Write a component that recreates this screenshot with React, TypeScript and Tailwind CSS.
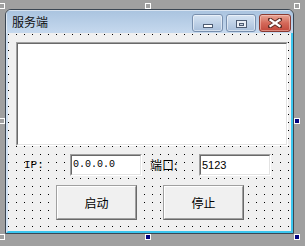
import React from 'react'

const cjk = "font-['Noto_Sans_CJK_SC','Noto_Sans',sans-serif]"

function Handle({ className, filled }: { className: string; filled?: boolean }) {
    return (
        <div
            className={
                'absolute w-[6px] h-[6px] border border-white ' +
                (filled ? 'bg-[#000080] ' : '') +
                className
            }
        />
    )
}

function Sunken({ className, children }: { className: string; children?: React.ReactNode }) {
    return (
        <div className={'border border-t-[#a0a0a0] border-l-[#a0a0a0] border-r-white border-b-white ' + className}>
            <div className="h-full w-full border border-t-[#696969] border-l-[#696969] border-r-[#e3e3e3] border-b-[#e3e3e3] bg-white flex items-center">
                {children}
            </div>
        </div>
    )
}

function RaisedButton({ label, className }: { label: string; className?: string }) {
    return (
        <div className={'w-[81px] h-[35px] border border-t-[#a0a0a0] border-l-[#a0a0a0] border-r-[#696969] border-b-[#696969] ' + (className ?? '')}>
            <div className="h-full w-full border border-t-white border-l-white border-r-[#a0a0a0] border-b-[#a0a0a0] bg-[#f0f0f0] flex items-center justify-center">
                <span className={cjk + ' text-[12px] text-black leading-none'}>{label}</span>
            </div>
        </div>
    )
}

function TitleButton({ children, className }: { children: React.ReactNode; className: string }) {
    return (
        <div className={'h-[18px] rounded-[3px] border flex items-end justify-center ' + className}>
            {children}
        </div>
    )
}

export default function App() {
    return (
        <div className="relative w-[305px] h-[246px] overflow-hidden bg-[#a0a0a0] pl-[5px] pt-[9px]">
            {/* form window */}
            <div className="w-[289px] h-[225px] rounded-t-[6px] border border-[#3b4652] flex flex-col overflow-hidden">
                {/* title bar */}
                <div className="h-[23px] shrink-0 flex items-start bg-gradient-to-b from-[#a9c3df] to-[#c6d9ee] shadow-[inset_1px_1px_0_rgba(255,255,255,0.55)]">
                    <span className={cjk + ' ml-[6px] mt-[5px] text-[12px] leading-[14px] text-[#111]'}>服务端</span>
                    <div className="ml-auto mt-[4px] mr-[2px] flex">
                        <TitleButton className="w-[31px] pb-[3px] border-[#7990ae] bg-gradient-to-b from-[#d6e4f3] to-[#a8bfdb] shadow-[inset_0_0_0_1px_rgba(255,255,255,0.5)]">
                            <div className="w-[10px] h-[4px] border border-[#4d5c72] bg-white" />
                        </TitleButton>
                        <TitleButton className="ml-[3px] w-[30px] pb-[3px] border-[#7990ae] bg-gradient-to-b from-[#d6e4f3] to-[#a8bfdb] shadow-[inset_0_0_0_1px_rgba(255,255,255,0.5)]">
                            <div className="w-[11px] h-[8px] border border-[#4d5c72] bg-[#e9eef5] flex items-center justify-center">
                                <div className="w-[5px] h-[3px] border border-[#4d5c72] bg-[#c9d3e0]" />
                            </div>
                        </TitleButton>
                        <TitleButton className="ml-[3px] w-[32px] pb-[3px] border-[#8a3a31] bg-gradient-to-b from-[#e7a596] via-[#d4695a] to-[#c2483b] shadow-[inset_0_0_0_1px_rgba(255,220,210,0.45)]">
                            <svg width="14" height="10" viewBox="0 0 14 10">
                                <path d="M2 1.5 L12 8.5 M12 1.5 L2 8.5" stroke="#5a2a24" strokeWidth="4" strokeLinecap="square" />
                                <path d="M2.5 2 L11.5 8 M11.5 2 L2.5 8" stroke="#ffffff" strokeWidth="2.2" strokeLinecap="square" />
                            </svg>
                        </TitleButton>
                    </div>
                </div>

                {/* client area */}
                <div className="flex-1 border-l-2 border-l-[#d2e2f3] border-r-2 border-r-[#3cc6ee] border-b-2 border-b-[#3cc6ee]">
                    <div className="h-full w-full bg-[#f0f0f0] bg-[image:conic-gradient(from_270deg_at_1px_1px,#000_90deg,transparent_0)] bg-[size:8px_8px] bg-[position:0_1px] pt-[9px] pl-[8px] flex flex-col">
                        <Sunken className="w-[272px] h-[104px]" />

                        <div className="mt-[8px] flex items-center">
                            <span className="ml-[8px] w-[46px] font-['Liberation_Mono',monospace] text-[11px] leading-none text-black">IP:</span>
                            <Sunken className="w-[72px] h-[22px]">
                                <span className="pl-[1px] font-['Liberation_Mono',monospace] text-[10px] leading-none text-black">0.0.0.0</span>
                            </Sunken>
                            <span className={cjk + ' ml-[8px] w-[49px] text-[12px] leading-none text-black'}>端口:</span>
                            <Sunken className="w-[72px] h-[22px]">
                                <span className="pl-[1px] font-['Liberation_Sans',Arial,sans-serif] text-[11px] leading-none text-black">5123</span>
                            </Sunken>
                        </div>

                        <div className="mt-[9px] ml-[40px] flex gap-[26px]">
                            <RaisedButton label="启动" />
                            <RaisedButton label="停止" />
                        </div>
                    </div>
                </div>
            </div>

            {/* selection handles */}
            <Handle className="-left-[1px] top-[3px]" />
            <Handle className="left-[145px] top-[3px]" />
            <Handle className="left-[294px] top-[3px]" />
            <Handle className="-left-[1px] top-[118px]" />
            <Handle className="left-[294px] top-[118px]" filled />
            <Handle className="-left-[1px] top-[234px]" />
            <Handle className="left-[145px] top-[234px]" filled />
            <Handle className="left-[294px] top-[234px]" filled />
        </div>
    )
}
